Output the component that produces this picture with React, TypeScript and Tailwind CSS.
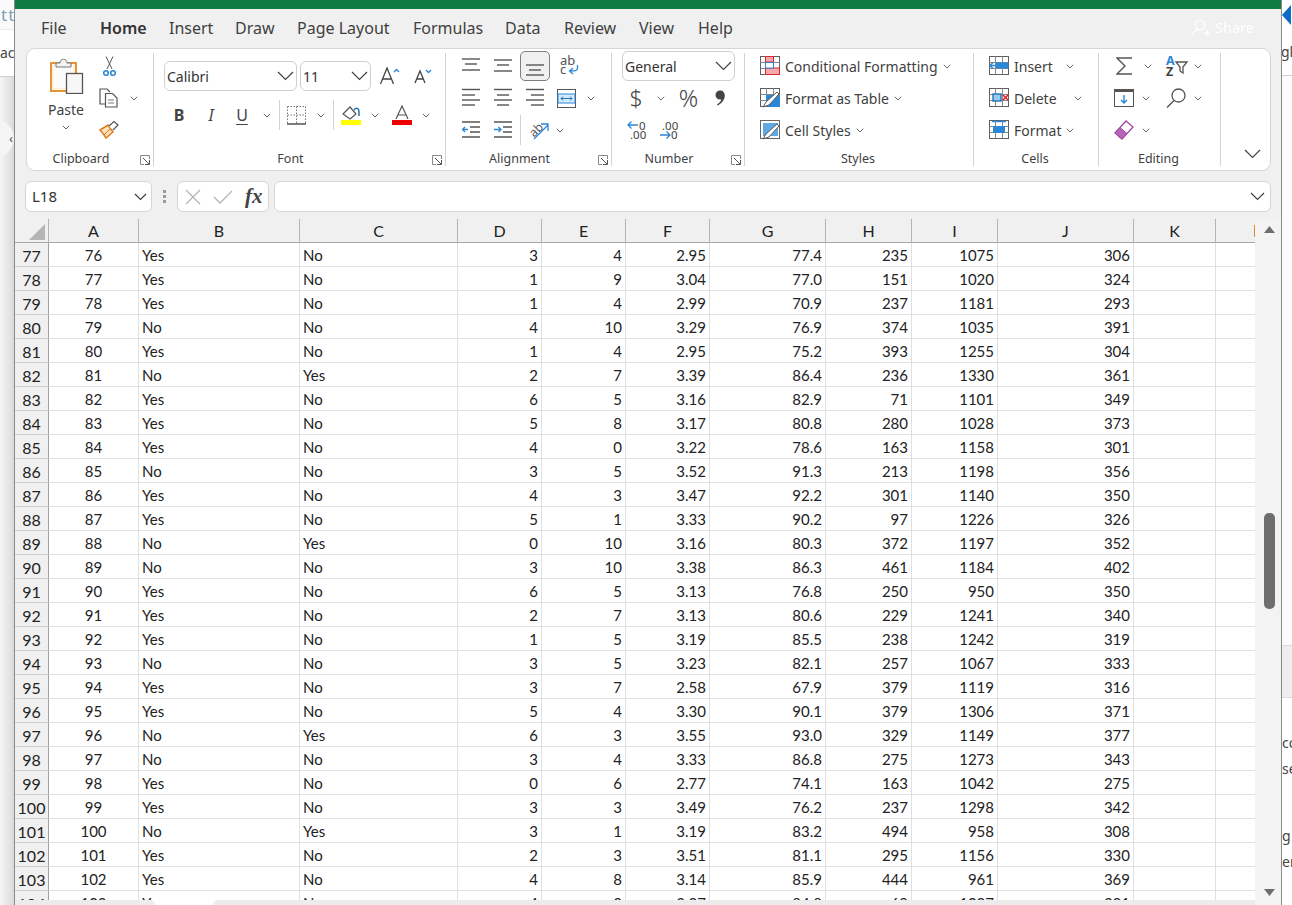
import React from "react";

const UI = { fontFamily: '"Noto Sans", "Liberation Sans", sans-serif' };
const CELL = { fontFamily: 'Lato, "Liberation Sans", sans-serif' };

const rows: string[][] = [
  "77 76 Yes No 3 4 2.95 77.4 235 1075 306",
  "78 77 Yes No 1 9 3.04 77.0 151 1020 324",
  "79 78 Yes No 1 4 2.99 70.9 237 1181 293",
  "80 79 No No 4 10 3.29 76.9 374 1035 391",
  "81 80 Yes No 1 4 2.95 75.2 393 1255 304",
  "82 81 No Yes 2 7 3.39 86.4 236 1330 361",
  "83 82 Yes No 6 5 3.16 82.9 71 1101 349",
  "84 83 Yes No 5 8 3.17 80.8 280 1028 373",
  "85 84 Yes No 4 0 3.22 78.6 163 1158 301",
  "86 85 No No 3 5 3.52 91.3 213 1198 356",
  "87 86 Yes No 4 3 3.47 92.2 301 1140 350",
  "88 87 Yes No 5 1 3.33 90.2 97 1226 326",
  "89 88 No Yes 0 10 3.16 80.3 372 1197 352",
  "90 89 No No 3 10 3.38 86.3 461 1184 402",
  "91 90 Yes No 6 5 3.13 76.8 250 950 350",
  "92 91 Yes No 2 7 3.13 80.6 229 1241 340",
  "93 92 Yes No 1 5 3.19 85.5 238 1242 319",
  "94 93 No No 3 5 3.23 82.1 257 1067 333",
  "95 94 Yes No 3 7 2.58 67.9 379 1119 316",
  "96 95 Yes No 5 4 3.30 90.1 379 1306 371",
  "97 96 No Yes 6 3 3.55 93.0 329 1149 377",
  "98 97 No No 3 4 3.33 86.8 275 1273 343",
  "99 98 Yes No 0 6 2.77 74.1 163 1042 275",
  "100 99 Yes No 3 3 3.49 76.2 237 1298 342",
  "101 100 No Yes 3 1 3.19 83.2 494 958 308",
  "102 101 Yes No 2 3 3.51 81.1 295 1156 330",
  "103 102 Yes No 4 8 3.14 85.9 444 961 369",
  "104 103 Yes No 4 3 3.27 84.8 69 1027 331",
].map((r) => r.split(" "));

const GRID = "grid grid-rows-[24px] grid-cols-[34px_90px_161px_158px_84px_84px_84px_116px_86px_86px_136px_82px_39px]";

function Ch({ className = "" }: { className?: string }) {
  return (
    <svg width="8" height="5" viewBox="0 0 8 5" className={"shrink-0 " + className}>
      <path d="M0.8 0.8 L4 4 L7.2 0.8" fill="none" stroke="#666" strokeWidth="1" />
    </svg>
  );
}

function BigCh({ className = "" }: { className?: string }) {
  return (
    <svg width="17" height="10" viewBox="0 0 17 10" className={"shrink-0 " + className}>
      <path d="M1 1 L8.5 8.5 L16 1" fill="none" stroke="#404040" strokeWidth="1.2" />
    </svg>
  );
}

function Launcher() {
  return (
    <svg width="10" height="10" viewBox="0 0 10 10">
      <path d="M9.500 4V0.500H0.500V9.500H4" fill="none" stroke="#8a8a8a" />
      <path d="M3 3L9 9M5 9.500H9.500V5" fill="none" stroke="#555" />
    </svg>
  );
}

function Lines({ ys, xs, className = "" }: { ys: number[]; xs: [number, number][]; className?: string }) {
  return (
    <svg width="18" height="22" viewBox="0 0 18 22" className={"shrink-0 " + className}>
      {ys.map((y, i) => (
        <path key={i} d={`M${xs[i][0]} ${y}H${xs[i][1]}`} stroke="#555" strokeWidth="1.4" />
      ))}
    </svg>
  );
}

function TableIcon({ children }: { children: React.ReactNode }) {
  return (
    <svg width="20" height="20" viewBox="0 0 20 20" className="shrink-0">
      <g fill="none" stroke="#5f5f5f">
        <rect x="0.5" y="0.5" width="19" height="18" fill="#fff" />
        <path d="M0.5 6.5H19.5M0.5 12.5H19.5M6.5 0.5V18.5M13.5 0.5V18.5" stroke="#888" />
      </g>
      {children}
    </svg>
  );
}

function Group({ w, label, launcher, children }: { w: string; label: string; launcher?: boolean; children: React.ReactNode }) {
  return (
    <div className={"flex flex-col h-full border-r border-[#d2d2d2] " + w}>
      <div className="flex-1 -mt-[3px] min-h-0">{children}</div>
      <div className={"relative h-[16px] flex items-center justify-center text-[12.5px] text-[#3f3f3f] pt-[2px] " + (launcher ? "pr-[18px]" : "pr-[2px]")}>
        {label}
        {launcher && (
          <span className="absolute right-[3px] top-[5px] flex">
            <Launcher />
          </span>
        )}
      </div>
    </div>
  );
}

function Dropdown({ w, text, className = "" }: { w: string; text: string; className?: string }) {
  return (
    <div className={"h-[30px] rounded-[6px] border border-[#cfcfcf] bg-white flex items-center justify-between pl-[2px] pr-[2px] text-[14px] text-[#333] " + w + " " + className}>
      <span>{text}</span>
      <BigCh />
    </div>
  );
}

function StyleRow({ icon, text, chev }: { icon: React.ReactNode; text: string; chev: string }) {
  return (
    <div className="h-[32px] flex items-center pl-[15px] text-[14px] text-[#3f3f3f] whitespace-nowrap">
      {icon}
      <span className="ml-[5px]">{text}</span>
      <Ch className={chev} />
    </div>
  );
}

function CellRow({ icon, text, w }: { icon: React.ReactNode; text: string; w: string }) {
  return (
    <div className="h-[32px] flex items-center pl-[15px] text-[14px] text-[#3f3f3f] whitespace-nowrap">
      {icon}
      <span className={"ml-[5px] " + w}>{text}</span>
      <Ch />
    </div>
  );
}

const tabs: [string, string][] = [
  ["File", "w-[85px] pl-[26px]"],
  ["Home", "w-[69px]"],
  ["Insert", "w-[66px]"],
  ["Draw", "w-[62px]"],
  ["Page Layout", "w-[116px]"],
  ["Formulas", "w-[92px]"],
  ["Data", "w-[59px]"],
  ["Review", "w-[75px]"],
  ["View", "w-[59px]"],
  ["Help", "w-[50px]"],
];

export default function App() {
  return (
    <div className="w-[1292px] h-[905px] overflow-hidden flex bg-white" style={UI}>
      {/* page behind, left */}
      <div className="w-[14px] h-full flex flex-col shrink-0 overflow-hidden">
        <div className="h-[30px] bg-[#fafafa] text-[17px] leading-[30px] text-[#7f9fbd] pl-[1px] whitespace-nowrap border-b border-[#eeeeee] tracking-[1px]">tt</div>
        <div className="h-[47px] bg-white text-[14px] leading-[46px] text-[#444] whitespace-nowrap border-b border-[#cfcfcf]">ac</div>
        <div className="flex-1 bg-gradient-to-r from-[#f6f6f6] to-[#dadada] pt-[43px]">
          <div className="w-[38px] h-[37px] -ml-[24px] rounded-full bg-[#f5f5f5] flex items-center justify-end pr-[1px] text-[13px] text-[#555]">‹</div>
        </div>
      </div>

      {/* window */}
      <div className="w-[1268px] h-full shrink-0 flex flex-col bg-[#f0f0f0] border-x border-[#8a8a8a]">
        <div className="h-[9px] bg-[#107c41] shrink-0" />

        {/* tabs */}
        <div className="h-[39px] shrink-0 flex items-center text-[16px] text-[#3f3f3f] pb-[1px]">
          {tabs.map(([t, c]) => (
            <span key={t} className={"whitespace-nowrap " + c + (t === "Home" ? " font-semibold text-[#333]" : "")}>{t}</span>
          ))}
          <div className="ml-auto mr-[27px] flex items-center text-[14.5px] text-white gap-[4px]">
            <svg width="20" height="20" viewBox="0 0 20 20">
              <circle cx="9" cy="7" r="5" fill="none" stroke="#fff" strokeWidth="1.2" />
              <path d="M1 18c1-4 4-6 8-6M13 15h6M16 12v6" fill="none" stroke="#fff" strokeWidth="1.2" />
            </svg>
            Share
          </div>
        </div>

        {/* ribbon */}
        <div className="ml-[11px] w-[1245px] h-[123px] shrink-0 rounded-[9px] border border-[#d6d6d6] bg-white flex py-[4px]">
          {/* clipboard */}
          <Group w="w-[127px]" label="Clipboard" launcher>
            <div className="flex">
              <div className="ml-[19px] w-[40px] flex flex-col items-center pt-[6px]">
                <svg width="36" height="38" viewBox="0 0 36 38">
                  <rect x="3" y="7" width="25" height="28" fill="#fff3dc" stroke="#e8923a" strokeWidth="2" />
                  <rect x="6" y="10" width="19" height="22" fill="#fbfbfb" />
                  <path d="M8 11V7h4c0-5 7-5 7 0h4v4z" fill="#f4f4f4" stroke="#777" />
                  <rect x="18.5" y="17.5" width="16" height="20" fill="#f7f7f7" stroke="#555" strokeWidth="1.3" />
                </svg>
                <span className="text-[14px] text-[#3f3f3f] mt-[6px] leading-[20px]">Paste</span>
                <Ch className="mt-[5px]" />
              </div>
              <div className="ml-[13px] flex flex-col">
                <div className="h-[32px] flex items-center pl-[4px]">
                  <svg width="13" height="21" viewBox="0 0 13 21">
                    <path d="M3 0.5L9 13M10 0.5L4 13" fill="none" stroke="#555" />
                    <circle cx="3" cy="17" r="2.3" fill="none" stroke="#2b88d8" strokeWidth="1.6" />
                    <circle cx="10" cy="17" r="2.3" fill="none" stroke="#2b88d8" strokeWidth="1.6" />
                  </svg>
                </div>
                <div className="h-[32px] flex items-center">
                  <svg width="20" height="20" viewBox="0 0 20 20">
                    <path d="M7 16H1V1h7l3 3" fill="#fff" stroke="#555" strokeWidth="1.2" />
                    <path d="M6.5 5.5h7l4.5 4.5v9h-11.500z" fill="#fff" stroke="#555" strokeWidth="1.2" />
                    <path d="M9 12h6M9 15h6" stroke="#777" />
                  </svg>
                  <Ch className="ml-[11px]" />
                </div>
                <div className="h-[32px] flex items-center -mt-[1px]">
                  <svg width="20" height="19" viewBox="0 0 20 19">
                    <path d="M1 10L9 5L14 12L7 18C5 15 3 12 1 10z" fill="#fbe0bd" stroke="#e07b1c" strokeWidth="1.5" />
                    <path d="M5 15L11 9" stroke="#e07b1c" />
                    <path d="M10 6L15 1.500L19 5L14 10" fill="#fff" stroke="#555" strokeWidth="1.2" />
                  </svg>
                </div>
              </div>
            </div>
          </Group>

          {/* font */}
          <Group w="w-[292px]" label="Font" launcher>
            <div className="flex items-center pt-[11px]">
              <Dropdown w="ml-[10px] w-[133px]" text="Calibri" />
              <Dropdown w="ml-[3px] w-[71px]" text="11" />
              <svg width="20" height="18" viewBox="0 0 20 18" className="ml-[9px]">
                <path d="M0.500 17L7 1L13.500 17M3 12H11" fill="none" stroke="#444" strokeWidth="1.3" />
                <path d="M14 5L16.500 2.500L19 5" fill="none" stroke="#2b88d8" strokeWidth="1.3" />
              </svg>
              <svg width="18" height="16" viewBox="0 0 18 16" className="ml-[14px]">
                <path d="M1 15L6 3L11 15M3 11H9" fill="none" stroke="#444" strokeWidth="1.3" />
                <path d="M12 2L14.500 4.500L17 2" fill="none" stroke="#2b88d8" strokeWidth="1.3" />
              </svg>
            </div>
            <div className="flex items-center mt-[9px] h-[30px] text-[#444]">
              <span className="ml-[17px] w-[16px] text-center text-[16px] font-bold">B</span>
              <span className="ml-[16px] w-[16px] text-center text-[16px] italic">I</span>
              <span className="ml-[15px] w-[16px] text-center text-[16px] underline underline-offset-[3px]">U</span>
              <Ch className="ml-[13px]" />
              <div className="ml-[8px] w-px h-[30px] bg-[#d2d2d2]" />
              <svg width="19" height="19" viewBox="0 0 19 19" className="ml-[7px]">
                <path d="M0.5 0.5H18.500V17M0.500 0.500V17M0.500 9H18.500M9.500 0.500V17" fill="none" stroke="#777" strokeDasharray="1.500 1.500" />
                <path d="M0 18H19" stroke="#444" strokeWidth="1.400" />
              </svg>
              <Ch className="ml-[11px]" />
              <div className="ml-[8px] w-px h-[30px] bg-[#d2d2d2]" />
              <svg width="20" height="20" viewBox="0 0 20 20" className="ml-[7px]">
                <path d="M2 9L9 2L15 9L9 14z" fill="#fff" stroke="#555" strokeWidth="1.200" />
                <path d="M13 5C15 2 18 3 18 7V11" fill="none" stroke="#1e74b8" strokeWidth="1.500" />
                <rect x="0" y="15" width="20" height="5" fill="#ffff00" />
              </svg>
              <Ch className="ml-[10px]" />
              <svg width="20" height="20" viewBox="0 0 20 20" className="ml-[13px]">
                <path d="M4 14L10 1L16 14M6 10H14" fill="none" stroke="#555" strokeWidth="1.200" />
                <rect x="0" y="15" width="20" height="5" fill="#f00000" />
              </svg>
              <Ch className="ml-[10px]" />
            </div>
          </Group>

          {/* alignment */}
          <Group w="w-[166px]" label="Alignment" launcher>
            <div className="h-[32px] flex items-center">
              <Lines className="ml-[16px] -mt-[4px]" ys={[6, 11, 17]} xs={[[0, 18], [3, 15], [0, 18]]} />
              <Lines className="ml-[14px]" ys={[5, 10, 16]} xs={[[0, 18], [3, 15], [0, 18]]} />
              <div className="ml-[8px] w-[30px] h-[30px] rounded-[5px] border border-[#7f7f7f] bg-[#f0f0f0] flex items-center justify-center">
                <Lines ys={[10, 15, 20]} xs={[[0, 18], [3, 15], [0, 18]]} />
              </div>
              <svg width="20" height="24" viewBox="0 0 20 24" className="ml-[9px] overflow-visible">
                <text x="1" y="11" fontSize="13" fill="#555" fontFamily="Noto Sans">ab</text>
                <text x="1" y="20" fontSize="13" fill="#555" fontFamily="Noto Sans">c</text>
                <path d="M18.500 11V14C18.500 17 16 17 11 17M14 14L10.500 17L14 20" fill="none" stroke="#2b88d8" strokeWidth="1.300" />
              </svg>
            </div>
            <div className="h-[32px] flex items-center">
              <Lines className="ml-[16px]" ys={[2.5, 8, 13, 18]} xs={[[0, 18], [0, 13], [0, 18], [0, 13]]} />
              <Lines className="ml-[14px]" ys={[2.5, 8, 13, 18]} xs={[[0, 18], [3, 15], [0, 18], [3, 15]]} />
              <Lines className="ml-[14px]" ys={[2.5, 8, 13, 18]} xs={[[0, 18], [5, 18], [0, 18], [5, 18]]} />
              <svg width="19" height="19" viewBox="0 0 19 19" className="ml-[13px]">
                <rect x="0.500" y="0.500" width="18" height="18" fill="#fff" stroke="#555" />
                <rect x="1" y="5" width="17" height="9" fill="#d5eafa" stroke="#2b88d8" />
                <path d="M4 9.500H15M6 7.500L4 9.500L6 11.500M13 7.500L15 9.500L13 11.500" fill="none" stroke="#1e74b8" />
              </svg>
              <Ch className="ml-[11px]" />
            </div>
            <div className="h-[32px] flex items-center">
              <svg width="18" height="18" viewBox="0 0 18 18" className="ml-[16px]">
                <path d="M0 1H18M8 6H18M8 11H18M0 16H18" stroke="#555" strokeWidth="1.300" />
                <path d="M6 8.500H0.500M3 6L0.500 8.500L3 11" fill="none" stroke="#2b88d8" strokeWidth="1.300" />
              </svg>
              <svg width="18" height="18" viewBox="0 0 18 18" className="ml-[14px]">
                <path d="M0 1H18M9 6H18M9 11H18M0 16H18" stroke="#555" strokeWidth="1.300" />
                <path d="M0 8.500H7M4.500 6L7 8.500L4.500 11" fill="none" stroke="#2b88d8" strokeWidth="1.300" />
              </svg>
              <div className="ml-[8px] w-px h-[30px] bg-[#d2d2d2]" />
              <svg width="21" height="20" viewBox="0 0 21 20" className="ml-[7px] overflow-visible">
                <text x="1" y="14" fontSize="12" fill="#555" fontFamily="Noto Sans" transform="rotate(-45 8 10)">ab</text>
                <path d="M6 19L20 5M13 4H20V11" fill="none" stroke="#2b88d8" strokeWidth="1.300" />
              </svg>
              <Ch className="ml-[7px]" />
            </div>
          </Group>

          {/* number */}
          <Group w="w-[133px]" label="Number" launcher>
            <div className="h-[32px] flex items-center">
              <Dropdown w="ml-[10px] w-[113px]" text="General" />
            </div>
            <div className="h-[32px] flex items-center text-[#444]">
              <span className="ml-[16px] w-[16px] text-center text-[23px] leading-none font-light">$</span>
              <Ch className="ml-[13px]" />
              <span className="ml-[12px] w-[22px] text-center text-[24px] leading-none font-light tracking-[-1px]">%</span>
              <svg width="10" height="16" viewBox="0 0 10 16" className="ml-[16px]">
                <path d="M5 0.500C8 0.500 9.800 2.600 9.800 5.500C9.800 10 6.500 13.500 2.500 15.500L2 14.500C4.500 12.800 6 11 6.300 9.500C3 10 0.500 8 0.500 5C0.500 2.500 2.500 0.500 5 0.500z" fill="#444" />
              </svg>
            </div>
            <div className="h-[32px] flex items-center">
              <svg width="21" height="22" viewBox="0 0 21 22" className="ml-[15px] overflow-visible">
                <path d="M11 6H1M4.500 2.500L1 6L4.500 9.500" fill="none" stroke="#2b88d8" strokeWidth="1.300" />
                <text x="12" y="11" fontSize="11.500" fill="#444" fontFamily="Noto Sans">0</text>
                <text x="3" y="20" fontSize="11.500" fill="#444" fontFamily="Noto Sans">.00</text>
              </svg>
              <svg width="21" height="22" viewBox="0 0 21 22" className="ml-[11px] overflow-visible">
                <text x="3" y="11" fontSize="11.500" fill="#444" fontFamily="Noto Sans">.00</text>
                <path d="M1 16H11M7.500 12.500L11 16L7.500 19.500" fill="none" stroke="#2b88d8" strokeWidth="1.300" />
                <text x="12" y="20" fontSize="11.500" fill="#444" fontFamily="Noto Sans">0</text>
              </svg>
            </div>
          </Group>

          {/* styles */}
          <Group w="w-[229px]" label="Styles">
            <StyleRow
              text="Conditional Formatting"
              chev="ml-[5px]"
              icon={
                <TableIcon>
                  <rect x="5.500" y="0.500" width="8" height="5.500" fill="#f8a8a8" stroke="#d9272e" />
                  <rect x="5.500" y="12" width="14" height="6.500" fill="#f8a8a8" stroke="#d9272e" />
                  <rect x="5.500" y="6.500" width="8" height="5.500" fill="#fff" stroke="#2b88d8" />
                </TableIcon>
              }
            />
            <StyleRow
              text="Format as Table"
              chev="ml-[5px]"
              icon={
                <TableIcon>
                  <path d="M6 7H20V19H6z" fill="#2b88d8" />
                  <path d="M3 19L6 14L17 4L19 6L9 17z" fill="#fff" stroke="#555" />
                </TableIcon>
              }
            />
            <StyleRow
              text="Cell Styles"
              chev="ml-[5px]"
              icon={
                <svg width="20" height="20" viewBox="0 0 20 20" className="shrink-0">
                  <rect x="0.500" y="0.500" width="19" height="18" fill="#fff" stroke="#666" />
                  <rect x="3" y="3" width="15" height="13" fill="#5ea9e4" />
                  <path d="M3 19L6 14L17 4L19 6L9 17z" fill="#fff" stroke="#555" />
                </svg>
              }
            />
          </Group>

          {/* cells */}
          <Group w="w-[125px]" label="Cells">
            <CellRow
              text="Insert"
              w="w-[52px]"
              icon={
                <TableIcon>
                  <rect x="7" y="6.500" width="12.500" height="6" fill="#2b88d8" />
                  <path d="M9 9.500H1M4 6.500L1 9.500L4 12.500" fill="none" stroke="#2b88d8" strokeWidth="1.400" />
                </TableIcon>
              }
            />
            <CellRow
              text="Delete"
              w="w-[60px]"
              icon={
                <TableIcon>
                  <rect x="4" y="6" width="8" height="7" fill="#9cc9ee" stroke="#1e74b8" strokeWidth="1.400" />
                  <path d="M14 7L19 12M19 7L14 12" stroke="#e81123" strokeWidth="1.400" />
                </TableIcon>
              }
            />
            <CellRow
              text="Format"
              w="w-[52px]"
              icon={
                <TableIcon>
                  <path d="M3 1.500H17" stroke="#2b88d8" strokeWidth="1.400" />
                  <rect x="4" y="6" width="12" height="7" fill="#2b88d8" />
                </TableIcon>
              }
            />
          </Group>

          {/* editing */}
          <Group w="w-[122px]" label="Editing">
            <div className="h-[32px] flex items-center">
              <svg width="17" height="18" viewBox="0 0 17 18" className="ml-[17px]">
                <path d="M16 1H1L9 9L1 17H16" fill="none" stroke="#555" strokeWidth="1.400" />
              </svg>
              <Ch className="ml-[11px]" />
              <svg width="22" height="24" viewBox="0 0 22 24" className="ml-[14px] overflow-visible">
                <text x="0" y="11" fontSize="12.500" fontWeight="700" fill="#2b88d8" fontFamily="Noto Sans">A</text>
                <text x="0" y="22" fontSize="12.500" fontWeight="700" fill="#444" fontFamily="Noto Sans">Z</text>
                <path d="M10 8H21L17 13V19L14 17V13z" fill="none" stroke="#555" strokeWidth="1.300" />
              </svg>
              <Ch className="ml-[6px]" />
            </div>
            <div className="h-[32px] flex items-center">
              <svg width="20" height="18" viewBox="0 0 20 18" className="ml-[15px]">
                <rect x="0.500" y="0.500" width="19" height="17" fill="#fff" stroke="#555" />
                <rect x="0" y="0" width="20" height="3" fill="#555" />
                <path d="M10 6V14M7 11L10 14L13 11" fill="none" stroke="#2b88d8" strokeWidth="1.400" />
              </svg>
              <Ch className="ml-[8px]" />
              <svg width="20" height="20" viewBox="0 0 20 20" className="ml-[16px]">
                <circle cx="12.500" cy="7.500" r="6.500" fill="none" stroke="#555" strokeWidth="1.300" />
                <path d="M8 12.500L1 19.500" stroke="#555" strokeWidth="1.400" />
              </svg>
              <Ch className="ml-[8px]" />
            </div>
            <div className="h-[32px] flex items-center">
              <svg width="20" height="20" viewBox="0 0 20 20" className="ml-[15px]">
                <path d="M1 13L12 1L19 7L8 19z" fill="#fff" stroke="#a349a4" strokeWidth="1.300" />
                <path d="M1 13L6 7.500L13 13.500L8 19z" fill="#b565b6" stroke="#a349a4" />
              </svg>
              <Ch className="ml-[8px]" />
            </div>
          </Group>

          <div className="flex-1 flex items-end justify-end pr-[9px] pb-[7px]">
            <BigCh />
          </div>
        </div>

        {/* formula bar */}
        <div className="h-[31px] mt-[10px] shrink-0 flex items-center ml-[10px]">
          <div className="w-[127px] h-[31px] rounded-[6px] border border-[#d6d6d6] bg-white flex items-center justify-between pl-[6px] pr-[4px] text-[15px] text-[#333]">
            L18
            <svg width="13" height="8" viewBox="0 0 13 8"><path d="M1 1L6.500 6.500L12 1" fill="none" stroke="#404040" strokeWidth="1.200" /></svg>
          </div>
          <div className="ml-[11px] w-[3px] flex flex-col gap-[2px]">
            <span className="h-[3px] bg-[#9a9a9a]" />
            <span className="h-[3px] bg-[#9a9a9a]" />
            <span className="h-[3px] bg-[#9a9a9a]" />
          </div>
          <div className="ml-[11px] w-[92px] h-[31px] rounded-[6px] border border-[#d6d6d6] bg-white flex items-center pl-[7px]">
            <svg width="16" height="16" viewBox="0 0 16 16"><path d="M1 1L15 15M15 1L1 15" stroke="#b5b5b5" strokeWidth="1.300" /></svg>
            <svg width="20" height="16" viewBox="0 0 20 16" className="ml-[12px]"><path d="M1 8L7 14L19 2" fill="none" stroke="#b5b5b5" strokeWidth="1.300" /></svg>
            <span className="ml-[12px] text-[21px] italic font-bold leading-none text-[#444]" style={{ fontFamily: '"Liberation Serif", serif' }}>fx</span>
          </div>
          <div className="ml-[5px] w-[997px] h-[31px] rounded-[6px] border border-[#d6d6d6] bg-white flex items-center justify-end pr-[5px]">
            <svg width="15" height="9" viewBox="0 0 15 9"><path d="M1 1L7.500 7.500L14 1" fill="none" stroke="#404040" strokeWidth="1.200" /></svg>
          </div>
        </div>

        {/* sheet */}
        <div className="flex flex-1 mt-[7px] min-h-0">
          <div className="w-[1240px] flex flex-col bg-white">
            <div className="flex-1 min-h-0 overflow-hidden text-[15px] text-[#222]" style={CELL}>
              <div className={GRID + " h-[24px] bg-[#f0f0f0] border-b border-[#a8a8a8] text-[16px] text-[#222]"}>
                <div className="border-r border-[#b4b4b4] flex items-end justify-end pr-[3px] pb-[3px]">
                  <svg width="16" height="16" viewBox="0 0 16 16"><path d="M16 0V16H0z" fill="#b5b5b5" /></svg>
                </div>
                {"ABCDEFGHIJK".split("").map((c) => (
                  <div key={c} className="border-r border-[#b4b4b4] flex items-center justify-center">{c}</div>
                ))}
                <div className="flex items-center justify-end">
                  <span className="w-px h-[12px] bg-[#e08a2e]" />
                </div>
              </div>
              {rows.map((r) => (
                <div key={r[0]} className={GRID + " h-[24px] leading-[25px]"}>
                  <div className="bg-[#f0f0f0] border-r border-b border-r-[#a0a0a0] border-b-[#cfcfcf] text-center text-[16px]">{r[0]}</div>
                  <div className="border-r border-b border-[#e0e0e0] text-center">{r[1]}</div>
                  <div className="border-r border-b border-[#e0e0e0] pl-[3px]">{r[2]}</div>
                  <div className="border-r border-b border-[#e0e0e0] pl-[3px]">{r[3]}</div>
                  {r.slice(4).map((v, i) => (
                    <div key={i} className="border-r border-b border-[#e0e0e0] text-right pr-[3px]">{v}</div>
                  ))}
                  <div className="border-r border-b border-[#e0e0e0]" />
                  <div className="border-b border-[#e0e0e0]" />
                </div>
              ))}
            </div>
            <div className="h-[5px] shrink-0 flex bg-white">
              <div className="w-[140px] bg-[#ececec] rounded-tr-[5px]" />
              <div className="ml-[58px] flex-1 bg-[#ececec] rounded-tl-[5px]" />
            </div>
          </div>
          <div className="flex-1 bg-[#f3f3f3] flex flex-col items-center pt-[7px] pb-[9px] pl-[2px]">
            <svg width="11" height="7" viewBox="0 0 11 7"><path d="M5.500 0L11 7H0z" fill="#6e6e6e" /></svg>
            <div className="w-[11px] h-[96px] rounded-[5px] bg-[#6e6e6e] mt-[280px] mb-auto" />
            <svg width="11" height="7" viewBox="0 0 11 7"><path d="M5.500 7L11 0H0z" fill="#6e6e6e" /></svg>
          </div>
        </div>
      </div>

      {/* page behind, right */}
      <div className="flex-1 h-full flex flex-col overflow-hidden bg-white text-[14px] text-[#555] whitespace-nowrap">
        <div className="h-[30px] pt-[4px]">
          <svg width="10" height="22" viewBox="0 0 10 22"><path d="M9 1V21L0 11z" fill="#0a6cc4" /></svg>
        </div>
        <div className="h-[46px] leading-[44px] border-b border-[#cfcfcf] text-[#444] -ml-[1px]">gle</div>
        <div className="h-[569px] bg-[#fbfbfb]" />
        <div className="h-[53px] bg-[#eeeeee] border-y border-[#dcdcdc]" />
        <div className="flex-1 bg-white pt-[32px] leading-[26px] text-[#444]">
          <div>co</div>
          <div>se</div>
          <div className="mt-[41px]">g</div>
          <div>er</div>
        </div>
      </div>
    </div>
  );
}
